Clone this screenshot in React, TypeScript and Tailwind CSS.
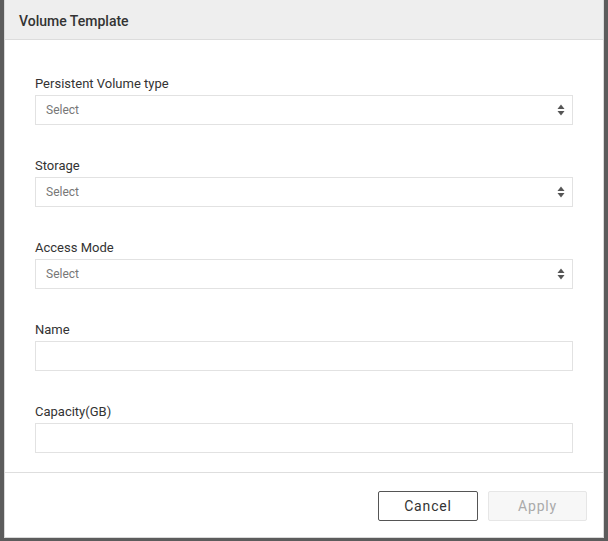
import React from "react";

const fields = [
    { label: "Persistent Volume type", kind: "select" },
    { label: "Storage", kind: "select" },
    { label: "Access Mode", kind: "select" },
    { label: "Name", kind: "input" },
    { label: "Capacity(GB)", kind: "input" },
];

function SortArrows() {
    return (
        <svg width="8" height="12" viewBox="0 0 8 12" className="text-[#555]">
            <path d="M4 0.5 L7.5 5 L0.5 5 Z" fill="currentColor" />
            <path d="M4 11.5 L7.5 7 L0.5 7 Z" fill="currentColor" />
        </svg>
    );
}

export default function App() {
    return (
        <div className="h-[541px] w-[608px] bg-[#5c5c5c] font-['Roboto',sans-serif] overflow-hidden">
            <div className="ml-[4px] w-[600px] h-[538px] bg-white border-x border-b border-[#d9d9d9] flex flex-col">
                <div className="h-[40px] bg-[#eeeeee] border-b border-[#dcdcdc] px-[14px] flex items-center">
                    <h2 className="text-[14px] leading-[18px] pt-[2px] font-medium text-[#333]">Volume Template</h2>
                </div>

                <div className="h-[433px] border-b border-[#dedede] px-[30px] pt-[35px] flex flex-col gap-[32px]">
                    {fields.map((field) => (
                        <div key={field.label} className="flex flex-col gap-[2px]">
                            <label className="text-[13px] leading-[18px] text-[#333]">{field.label}</label>
                            <div className="h-[30px] border border-[#e2e2e2] flex items-center justify-between pl-[10px] pr-[7px]">
                                {field.kind === "select" ? (
                                    <>
                                        <span className="text-[12px] text-[#777]">Select</span>
                                        <SortArrows />
                                    </>
                                ) : null}
                            </div>
                        </div>
                    ))}
                </div>

                <div className="flex justify-end gap-[10px] pt-[18px] pr-[16px]">
                    <button className="w-[100px] h-[30px] border border-[#555] rounded-[2px] text-[14px] tracking-[0.06em] text-[#333] bg-white">
                        Cancel
                    </button>
                    <button className="w-[99px] h-[30px] border border-[#e6e6e6] rounded-[2px] text-[14px] tracking-[0.06em] text-[#aaa] bg-[#f7f7f7]">
                        Apply
                    </button>
                </div>
            </div>
        </div>
    );
}
